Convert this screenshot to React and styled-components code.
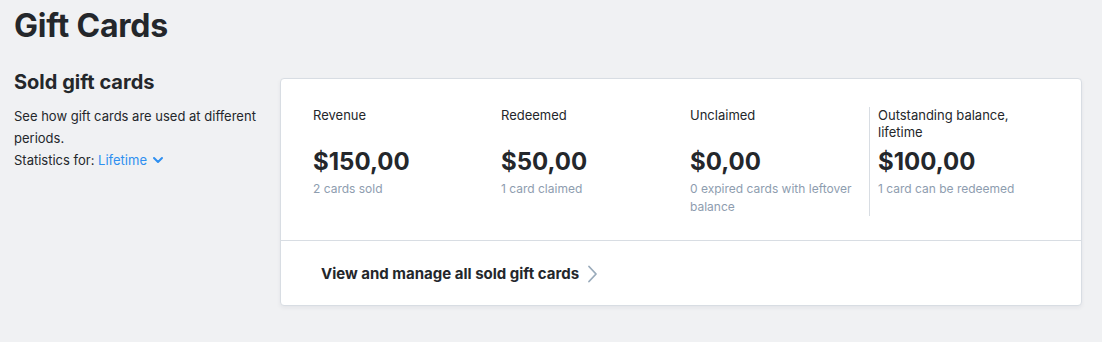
import styled, { createGlobalStyle } from "styled-components";

const GlobalStyle = createGlobalStyle`
  html, body {
    margin: 0;
    padding: 0;
    background: #f0f1f3;
  }
  body {
    font-family: "Inter", "Noto Sans", sans-serif;
    color: #24272b;
  }
`;

const stats = [
  { label: "Revenue", value: "$150,00", note: "2 cards sold" },
  { label: "Redeemed", value: "$50,00", note: "1 card claimed" },
  { label: "Unclaimed", value: "$0,00", note: "0 expired cards with leftover balance" },
  { label: "Outstanding balance, lifetime", value: "$100,00", note: "1 card can be redeemed", divided: true },
];

function ChevronDown() {
  return (
    <svg width="12" height="12" viewBox="0 0 12 12" fill="none">
      <path d="M2 4l4 4 4-4" stroke="#2e8ff0" strokeWidth="2" strokeLinecap="round" strokeLinejoin="round" />
    </svg>
  );
}

function ChevronRight() {
  return (
    <svg width="12" height="18" viewBox="0 0 12 18" fill="none">
      <path d="M3 1.5l7 7.5-7 7.5" stroke="#9aabbb" strokeWidth="1.8" strokeLinecap="round" strokeLinejoin="round" />
    </svg>
  );
}

export default function App() {
  return (
    <Page>
      <GlobalStyle />
      <Title>Gift Cards</Title>
      <Layout>
        <Aside>
          <SectionTitle>Sold gift cards</SectionTitle>
          <Description>See how gift cards are used at different periods.</Description>
          <Period>
            Statistics for:{" "}
            <PeriodLink>
              Lifetime <ChevronDown />
            </PeriodLink>
          </Period>
        </Aside>
        <Card>
          <StatsGrid>
            {stats.map((s) => (
              <Stat key={s.label} $divided={s.divided}>
                <StatLabel>{s.label}</StatLabel>
                <StatValue>{s.value}</StatValue>
                <StatNote>{s.note}</StatNote>
              </Stat>
            ))}
          </StatsGrid>
          <Footer>
            <FooterLink>
              View and manage all sold gift cards
              <ChevronRight />
            </FooterLink>
          </Footer>
        </Card>
      </Layout>
    </Page>
  );
}

const Page = styled.div`
  padding: 8px 20px 36px 14px;
`;

const Title = styled.h1`
  margin: 0;
  font-size: 32px;
  line-height: 36px;
  font-weight: 700;
  color: #24272b;
  letter-spacing: -0.2px;
`;

const Layout = styled.div`
  display: grid;
  grid-template-columns: 266px 1fr;
  align-items: start;
  margin-top: 26px;
`;

const Aside = styled.div`
  padding-right: 14px;
`;

const SectionTitle = styled.h2`
  margin: 0 0 11px;
  font-size: 20px;
  line-height: 24px;
  font-weight: 700;
  color: #24272b;
`;

const Description = styled.p`
  margin: 0;
  font-size: 13px;
  line-height: 22px;
  color: #24272b;
`;

const Period = styled.div`
  font-size: 13px;
  line-height: 22px;
  color: #24272b;
`;

const PeriodLink = styled.span`
  color: #2e8ff0;
  display: inline-flex;
  align-items: center;
  gap: 5px;
  cursor: pointer;
`;

const Card = styled.div`
  margin-top: 8px;
  background: #fff;
  border: 1px solid #d8dde3;
  border-radius: 4px;
  box-shadow: 0 2px 4px rgba(30, 40, 60, 0.06);
`;

const StatsGrid = styled.div`
  display: grid;
  grid-template-columns: 188px 189px 179px 1fr;
  padding: 28px 32px 24px 32px;
`;

const Stat = styled.div`
  display: flex;
  flex-direction: column;
  ${(p) =>
    p.$divided &&
    `
    border-left: 1px solid #d8dde3;
    padding-left: 8px;
  `}
`;

const StatLabel = styled.div`
  font-size: 13px;
  line-height: 17px;
  color: #24272b;
  min-height: 34px;
`;

const StatValue = styled.div`
  font-size: 24px;
  line-height: 28px;
  font-weight: 700;
  color: #24272b;
  margin-top: 7px;
`;

const StatNote = styled.div`
  font-size: 12px;
  line-height: 18px;
  color: #8e9daf;
  margin-top: 4px;
  padding-right: 16px;
`;

const Footer = styled.div`
  border-top: 1px solid #d8dde3;
  padding: 22px 40px 21px;
`;

const FooterLink = styled.div`
  display: inline-flex;
  align-items: center;
  gap: 7px;
  font-size: 15px;
  line-height: 20px;
  font-weight: 700;
  color: #24272b;
  cursor: pointer;
`;
